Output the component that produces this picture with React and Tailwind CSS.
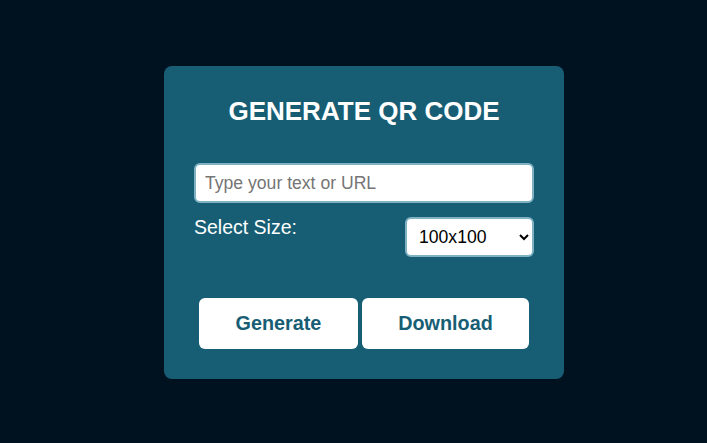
import { useState } from 'react'

const SIZES = ['100x100', '150x150', '200x200', '250x250', '300x300']

export default function App() {
  const [texto, setTexto] = useState('')
  const [tamanho, setTamanho] = useState(SIZES[0])

  return (
    <div
      className="min-h-screen bg-[#00111f] flex items-center justify-center pl-[21px] pt-[2px]"
      style={{ fontFamily: '"Liberation Sans", Arial, sans-serif' }}
    >
      <div className="w-[400px] bg-[#175e75] rounded-lg px-[30px] pt-[30px] pb-[30px] flex flex-col">
        <h1 className="text-white font-bold text-[26px] leading-[30px] text-center">
          GENERATE QR CODE
        </h1>

        <input
          type="text"
          value={texto}
          onChange={(e) => setTexto(e.target.value)}
          placeholder="Type your text or URL"
          className="mt-[37px] h-[40px] w-full bg-white border-2 border-[#7fb3c4] rounded-md pl-[9px] text-[17.6px] text-black placeholder:text-[#757575] outline-none"
        />

        <div className="mt-[14px] flex items-start justify-between">
          <label className="-mt-[1px] text-white text-[19.5px] leading-[22px]">Select Size:</label>
          <select
            value={tamanho}
            onChange={(e) => setTamanho(e.target.value)}
            className="w-[129px] h-[40px] bg-white border-2 border-[#7fb3c4] rounded-md pl-[8px] pr-[4px] text-[17.6px] text-black"
          >
            {SIZES.map((s) => (
              <option key={s} value={s}>
                {s}
              </option>
            ))}
          </select>
        </div>

        <div className="mt-[41px] flex justify-center gap-[4px]">
          <button
            type="button"
            className="h-[51px] w-[159px] bg-white rounded-md text-[#175e75] font-bold text-[19.8px]"
          >
            Generate
          </button>
          <button
            type="button"
            className="h-[51px] w-[167px] bg-white rounded-md text-[#175e75] font-bold text-[19.8px]"
          >
            Download
          </button>
        </div>
      </div>
    </div>
  )
}
